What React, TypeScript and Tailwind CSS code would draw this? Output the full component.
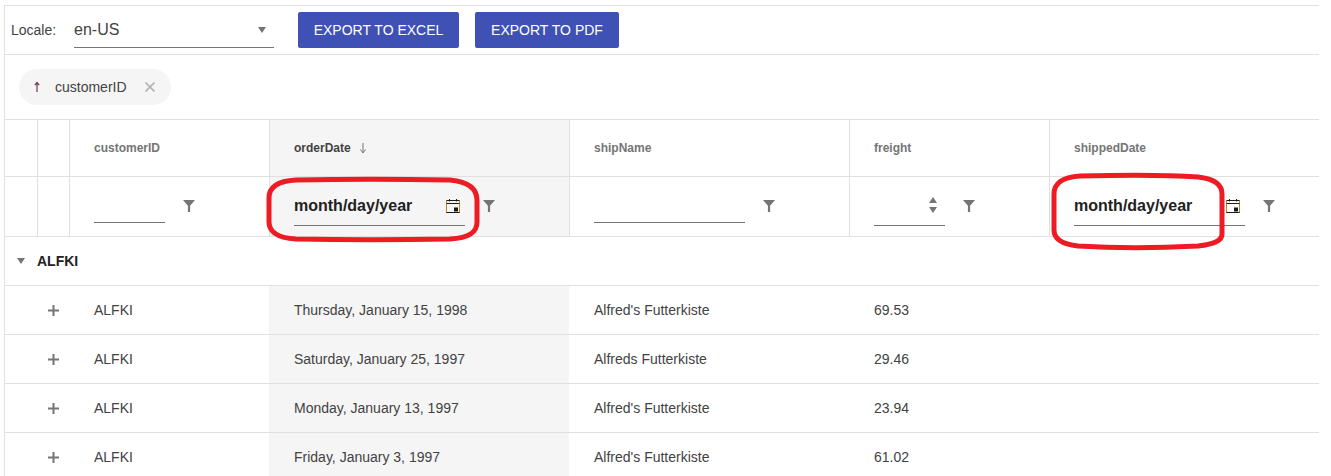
import React from "react";

const Filter = () => (
  <svg width="14" height="14" viewBox="0 0 14 14" className="shrink-0"><path d="M1 1h12L8.1 6.8V13H5.9V6.8z" fill="#757575" /></svg>
);

const Calendar = () => (
  <svg width="16" height="16" viewBox="0 0 16 16" fill="none" className="shrink-0 translate-y-[1px]">
    <path d="M1.5 2.5v12.5M14.5 2.5v12.5" stroke="#b5862a" strokeWidth="1" />
    <path d="M1.5 2.5h13M1.5 5.5h13M1.5 14.5h13" stroke="#1a1a1a" strokeWidth="1" />
    <path d="M4.5 1v2.5M11.5 1v2.5" stroke="#1a1a1a" strokeWidth="1" />
    <rect x="9" y="9.5" width="4" height="4" fill="#1a1a1a" />
  </svg>
);

const Plus = () => (
  <svg width="11" height="11" viewBox="0 0 11 11"><path d="M5.5 0v11M0 5.5h11" stroke="#757575" strokeWidth="2" /></svg>
);

const Caret = ({ className = "" }: { className?: string }) => (
  <svg width="8" height="6" viewBox="0 0 8 6" className={className}><path d="M0 0h8L4 6z" fill="#757575" /></svg>
);

const cols = ["w-[200px]", "w-[300px]", "w-[280px]", "w-[200px]", "w-[269px]"];

const rows = [
  ["Thursday, January 15, 1998", "Alfred's Futterkiste", "69.53"],
  ["Saturday, January 25, 1997", "Alfreds Futterkiste", "29.46"],
  ["Monday, January 13, 1997", "Alfred's Futterkiste", "23.94"],
  ["Friday, January 3, 1997", "Alfred's Futterkiste", "61.02"],
];

const HeaderCell = ({ w, children, active }: { w: string; children: React.ReactNode; active?: boolean }) => (
  <div className={`${w} shrink-0 border-l border-[#e0e0e0] pl-6 flex items-center gap-2 text-[12px] font-bold ${active ? "bg-[#f5f5f5] text-[#424242]" : "text-[#757575]"}`}>
    {children}
  </div>
);

const FilterCell = ({ w, active, children }: { w: string; active?: boolean; children: React.ReactNode }) => (
  <div className={`${w} shrink-0 border-l border-[#e0e0e0] pl-6 flex items-center ${active ? "bg-[#f5f5f5]" : ""}`}>
    {children}
  </div>
);

const DateInput = () => (
  <div className="w-[171px] h-[40px] -translate-y-[1px] border-b border-[#757575] flex items-center justify-between pr-[4px]">
    <span className="text-[16px] font-bold text-[#212121] translate-y-[1px]">month/day/year</span>
    <Calendar />
  </div>
);

const Line = ({ w }: { w: string }) => <div className={`${w} h-[34px] -translate-y-[1px] border-b border-[#757575]`} />;

const FilterIcon = () => <span className="ml-[18px] -translate-y-[1px] -translate-x-[1px]"><Filter /></span>;

export default function App() {
  return (
    <div className="relative w-[1331px] h-[476px] bg-white overflow-hidden font-['Liberation_Sans',sans-serif] pt-[5px] pl-[4px]">
      <div className="w-[1315px] h-[471px] border-l border-t border-[#e0e0e0] overflow-hidden">
        <div className="h-[49px] border-b border-[#e0e0e0] flex items-center pl-[6px]">
          <span className="text-[14px] text-[#424242] w-[63px]">Locale:</span>
          <div className="w-[200px] h-[36px] border-b border-[#757575] flex items-center justify-between pr-[8px] text-[16px] text-[#424242]">
            <span>en-US</span>
            <Caret />
          </div>
          <button className="ml-[24px] w-[161px] h-[36px] bg-[#3f51b5] rounded-[2px] text-white text-[14px]">EXPORT TO EXCEL</button>
          <button className="ml-[16px] w-[144px] h-[36px] bg-[#3f51b5] rounded-[2px] text-white text-[14px]">EXPORT TO PDF</button>
        </div>
        <div className="h-[65px] border-b border-[#e0e0e0] flex items-center pl-[14px]">
          <div className="w-[152px] h-[36px] rounded-full bg-[#f5f5f5] flex items-center pl-[13px] text-[14px]">
            <svg width="10" height="12" viewBox="0 0 10 12" className="shrink-0"><path d="M5 11V2M2.8 4.2L5 1.5l2.2 2.7" stroke="#6b3a5e" strokeWidth="1.2" fill="none" /></svg>
            <span className="ml-[13px] text-[#424242]">customerID</span>
            <svg width="12" height="12" viewBox="0 0 12 12" className="ml-[17px]"><path d="M1.5 1.5l9 9M10.5 1.5l-9 9" stroke="#b0b0b0" strokeWidth="1.7" /></svg>
          </div>
        </div>
        <div className="h-[57px] border-b border-[#e0e0e0] flex">
          <div className="w-[32px] shrink-0" />
          <div className="w-[32px] shrink-0 border-l border-[#e0e0e0]" />
          <HeaderCell w={cols[0]}>customerID</HeaderCell>
          <HeaderCell w={cols[1]} active>
            orderDate
            <svg width="8" height="12" viewBox="0 0 8 12"><path d="M4 1v9M1.5 7.5L4 11l2.5-3.5" stroke="#757575" strokeWidth="1" fill="none" /></svg>
          </HeaderCell>
          <HeaderCell w={cols[2]}>shipName</HeaderCell>
          <HeaderCell w={cols[3]}>freight</HeaderCell>
          <HeaderCell w={cols[4]}>shippedDate</HeaderCell>
        </div>
        <div className="h-[60px] border-b border-[#e0e0e0] flex">
          <div className="w-[32px] shrink-0" />
          <div className="w-[32px] shrink-0 border-l border-[#e0e0e0]" />
          <FilterCell w={cols[0]}><Line w="w-[71px]" /><FilterIcon /></FilterCell>
          <FilterCell w={cols[1]} active><DateInput /><FilterIcon /></FilterCell>
          <FilterCell w={cols[2]}><Line w="w-[151px]" /><FilterIcon /></FilterCell>
          <FilterCell w={cols[3]}>
            <div className="w-[71px] h-[40px] -translate-y-[1px] border-b border-[#757575] flex flex-col items-end justify-center gap-[4px] pr-[8px]">
              <Caret className="rotate-180" />
              <Caret />
            </div>
            <FilterIcon />
          </FilterCell>
          <FilterCell w={cols[4]}><DateInput /><FilterIcon /></FilterCell>
        </div>
        <div className="h-[49px] border-b border-[#e0e0e0] flex items-center pl-[12px]">
          <Caret />
          <span className="ml-[12px] text-[14px] font-bold text-[#212121]">ALFKI</span>
        </div>
        {rows.map((r, i) => (
          <div key={i} className="h-[49px] border-b border-[#e0e0e0] flex text-[14px] text-[#424242]">
            <div className="w-[64px] shrink-0 flex items-center justify-end pr-[10px]"><Plus /></div>
            <div className={`${cols[0]} shrink-0 pl-[25px] flex items-center`}>ALFKI</div>
            <div className={`${cols[1]} shrink-0 pl-[25px] flex items-center bg-[#f5f5f5]`}>{r[0]}</div>
            <div className={`${cols[2]} shrink-0 pl-[25px] flex items-center`}>{r[1]}</div>
            <div className={`${cols[3]} shrink-0 pl-[25px] flex items-center`}>{r[2]}</div>
          </div>
        ))}
      </div>
      <svg className="absolute left-0 top-0 pointer-events-none" width="1331" height="476" fill="none">
        <path d="M296 180 C340 179 400 179 450 180 C470 182 477 190 477 200 L477 222 C477 232 470 238 450 239 C400 240 340 240 296 239 C275 238 269 230 269 222 L269 198 C269 188 276 181 296 180Z" stroke="#ed1c24" strokeWidth="5" />
        <path d="M1080 176 C1120 175 1170 175 1198 177 C1216 179 1222 186 1222 194 L1222 234 C1222 240 1216 244 1198 246 C1160 248 1110 248 1078 246 C1060 244 1054 238 1054 230 L1054 194 C1054 184 1062 177 1080 176Z" stroke="#ed1c24" strokeWidth="5" />
      </svg>
    </div>
  );
}
